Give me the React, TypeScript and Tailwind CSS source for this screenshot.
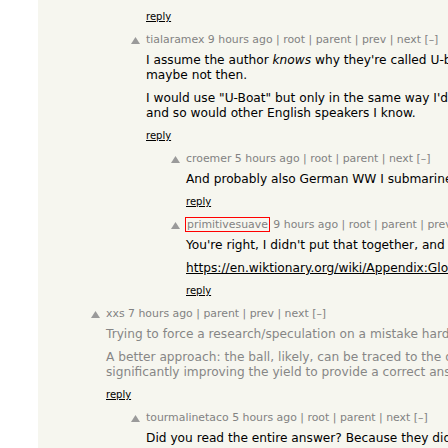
import type { ReactNode } from "react"

type CommentProps = {
  level: number
  user: string
  age: string
  links: string[]
  flagged?: boolean
  faded?: boolean
  children: ReactNode
}

const indents = ["pl-[53px]", "pl-[93px]", "pl-[133px]"]

function VoteArrow() {
  return (
    <svg width="9" height="7" viewBox="0 0 9 7" className="block">
      <polygon points="4.5,0 9,7 0,7" fill="#9a9a9a" />
    </svg>
  )
}

function Reply() {
  return (
    <div className="text-[10px] leading-[12px] text-black">
      <a href="#" className="underline">
        reply
      </a>
    </div>
  )
}

function Comment({ level, user, age, links, flagged, faded, children }: CommentProps) {
  return (
    <div className={`flex pt-[10px] ${indents[level]}`}>
      <div className="w-[15px] flex-none pt-[4px]">
        <VoteArrow />
      </div>
      <div className="min-w-0">
        <div className="whitespace-nowrap text-[10.9px] leading-[14px] text-[#828282]">
          {flagged ? (
            <span className="-ml-px border border-[#f00] px-px">{user}</span>
          ) : (
            <span>{user}</span>
          )}{" "}
          {age}
          {links.map((l) => (
            <span key={l}> | {l}</span>
          ))}{" "}
          [–]
        </div>
        <div
          className={`mt-[6px] flex flex-col gap-[8px] whitespace-nowrap text-[12.2px] leading-[15px] ${
            faded ? "text-[#868686]" : "text-black"
          }`}
        >
          {children}
        </div>
        <div className="mt-[9px]">
          <Reply />
        </div>
      </div>
    </div>
  )
}

export default function App() {
  return (
    <div className="h-screen w-full overflow-hidden bg-white font-['DejaVu_Sans',Verdana,sans-serif]">
      <div className="ml-[38px] h-full w-[900px] bg-[#f6f6ef]">
        <div className="pl-[108px] pt-[11px]">
          <Reply />
        </div>

        <Comment level={1} user="tialaramex" age="9 hours ago" links={["root", "parent", "prev", "next"]}>
          <p>
            I assume the author <i>knows</i> why they're called U-boats, but
            <br />
            maybe not then.
          </p>
          <p>
            I would use "U-Boat" but only in the same way I'd use "Jeep",
            <br />
            and so would other English speakers I know.
          </p>
        </Comment>

        <Comment level={2} user="croemer" age="5 hours ago" links={["root", "parent", "next"]}>
          <p>And probably also German WW I submarines.</p>
        </Comment>

        <Comment
          level={2}
          user="primitivesuave"
          age="9 hours ago"
          links={["root", "parent", "prev", "next"]}
          flagged
        >
          <p>You're right, I didn't put that together, and it makes sense.</p>
          <p>
            <a href="#" className="underline">
              https://en.wiktionary.org/wiki/Appendix:Glossary_of_military
            </a>
          </p>
        </Comment>

        <Comment level={0} user="xxs" age="7 hours ago" links={["parent", "prev", "next"]} faded>
          <p>Trying to force a research/speculation on a mistake hardly helps.</p>
          <p>
            A better approach: the ball, likely, can be traced to the data set,
            <br />
            significantly improving the yield to provide a correct answer.
          </p>
        </Comment>

        <Comment level={1} user="tourmalinetaco" age="5 hours ago" links={["root", "parent", "next"]}>
          <p>Did you read the entire answer? Because they did exactly that.</p>
        </Comment>
      </div>
    </div>
  )
}
